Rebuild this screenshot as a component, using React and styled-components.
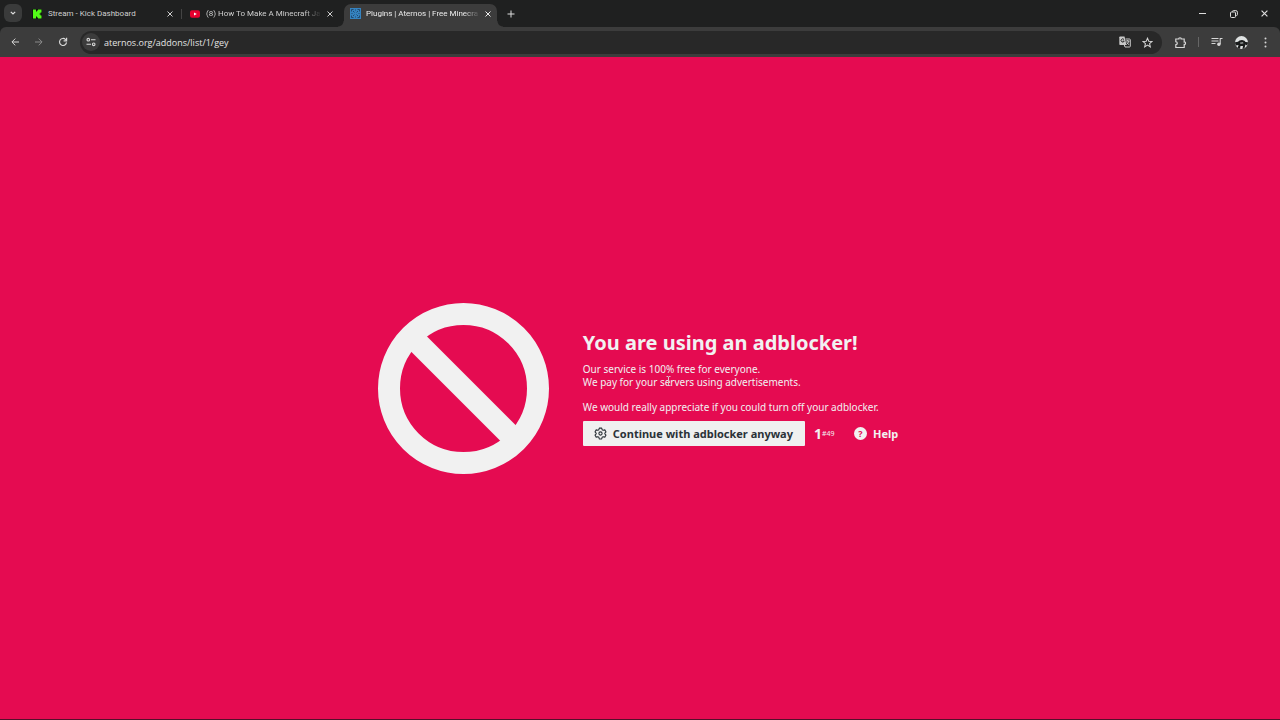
import React from 'react';
import styled, { createGlobalStyle } from 'styled-components';

const GlobalStyle = createGlobalStyle`
  * {
    box-sizing: border-box;
  }

  body {
    margin: 0;
    background: #e50b51;
    font-family: 'Open Sans', 'Noto Sans', sans-serif;
  }

  button {
    padding: 0;
    border: 0;
    background: none;
    color: inherit;
    font: inherit;
    cursor: pointer;
  }

  svg {
    display: block;
    flex: none;
  }
`;

const Browser = styled.div`
  display: flex;
  flex-direction: column;
  min-height: 100vh;
  background: #1f2020;
`;

const TabStrip = styled.header`
  display: flex;
  align-items: flex-end;
  height: 27px;
  padding-left: 4px;
  color: #dedede;
`;

const TabSearch = styled.button`
  display: grid;
  place-items: center;
  width: 18px;
  height: 18px;
  margin: 0 4px 5px 0;
  border-radius: 6px;
  background: #3a3b3b;
`;

const Tab = styled.div`
  position: relative;
  display: flex;
  align-items: center;
  gap: ${(props) => (props.$active ? 5 : 6)}px;
  width: 153px;
  height: 23px;
  padding: 0 6px 4px;
  border-radius: 7px 7px 0 0;
  background: ${(props) => (props.$active ? '#3c3c3c' : 'transparent')};
  color: ${(props) => (props.$active ? '#ececec' : '#cfcfcf')};

  &::before,
  &::after {
    content: '';
    display: ${(props) => (props.$active ? 'block' : 'none')};
    position: absolute;
    bottom: 0;
    width: 6px;
    height: 6px;
  }
  &::before {
    right: 100%;
    background: radial-gradient(circle at 0 0, transparent 5px, #3c3c3c 6px);
  }
  &::after {
    left: 100%;
    background: radial-gradient(circle at 100% 0, transparent 5px, #3c3c3c 6px);
  }
`;

const TabTitle = styled.span`
  flex: 1;
  font-family: Roboto, 'Open Sans', sans-serif;
  font-size: 8px;
  line-height: 12px;
  white-space: nowrap;
  mask-image: ${(props) =>
    props.$fade ? 'linear-gradient(to left, transparent, #000 16px)' : 'none'};
`;

const TabDivider = styled.span`
  width: 1px;
  height: 10px;
  margin: 0 ${(props) => (props.$hidden ? 3 : 2)}px 8px;
  background: ${(props) => (props.$hidden ? 'transparent' : '#444')};
`;

const IconButton = styled.button`
  display: grid;
  place-items: center;
  width: ${(props) => props.$width || 12}px;
  height: ${(props) => props.$height || 18}px;
  opacity: ${(props) => (props.disabled ? 0.5 : 1)};
`;

const WindowButtons = styled.div`
  display: flex;
  align-items: center;
  height: 27px;
  margin-left: auto;
`;

const Toolbar = styled.nav`
  display: flex;
  align-items: center;
  height: 30px;
  padding: 0 5px 0 3px;
  border-radius: 6px 6px 0 0;
  background: #3c3c3c;
  color: #d6d6d6;
`;

const AddressBar = styled.label`
  display: flex;
  flex: 1;
  align-items: center;
  height: 23px;
  margin: 0 7px 0 5px;
  padding: 0 4px 0 2px;
  border-radius: 12px;
  background: #282828;
`;

const SiteInfo = styled.button`
  display: grid;
  place-items: center;
  width: 18px;
  height: 18px;
  margin-right: 4px;
  border-radius: 50%;
  background: #3c3c3c;
`;

const Address = styled.input`
  flex: 1;
  min-width: 0;
  padding: 0;
  border: 0;
  outline: 0;
  background: none;
  color: #e4e4e4;
  font-family: inherit;
  font-size: 9px;
`;

const ToolDivider = styled.span`
  width: 1px;
  height: 10px;
  margin: 0 6px;
  background: #666;
`;

const Page = styled.main`
  display: flex;
  flex: 1;
  align-items: center;
  justify-content: center;
  gap: 34px;
  padding-right: 4px;
  border-bottom: 1px solid #54102a;
  background: #e50b51;
  color: #f1f1f1;
`;

const Message = styled.section`
  position: relative;
  padding-bottom: 2px;
  font-family: 'Noto Sans', 'Open Sans', sans-serif;
`;

const Title = styled.h1`
  margin: 0 0 6px;
  font-size: 20px;
  line-height: 28px;
`;

const Paragraph = styled.p`
  margin: 0 0 12px;
  font-size: 10px;
  line-height: 13px;
`;

const Actions = styled.div`
  display: flex;
  align-items: center;
  margin-top: -5px;
  font-size: 11px;
  font-weight: 700;
`;

const Continue = styled.button`
  display: flex;
  align-items: center;
  gap: 6px;
  height: 25px;
  padding: 0 12px 0 11px;
  border-radius: 1px;
  background: #f0f0f0;
  color: #2b3238;
`;

const Counter = styled.span`
  display: flex;
  align-items: center;
  width: 40px;
  margin-left: 9px;
  font-size: 14px;
`;

const CounterId = styled.small`
  font-size: 7px;
  font-weight: 400;
`;

const Help = styled.a`
  display: flex;
  align-items: center;
  gap: 6px;
  color: inherit;
  text-decoration: none;
`;

const HelpMark = styled.span`
  display: grid;
  place-items: center;
  width: 13px;
  height: 13px;
  border-radius: 50%;
  background: #f1f1f1;
  color: #e50b51;
  font-size: 9px;
  line-height: 13px;
`;

const TextCursor = styled.svg`
  position: absolute;
  top: 47px;
  left: 83px;
`;

function Icon({ size = 12, box = 24, width = 2, children }) {
  return (
    <svg
      width={size}
      height={size}
      viewBox={`0 0 ${box} ${box}`}
      fill="none"
      stroke="currentColor"
      strokeWidth={width}
      aria-hidden="true"
    >
      {children}
    </svg>
  );
}

function CloseIcon({ size = 6 }) {
  return (
    <Icon size={size} box={6} width={1}>
      <path d="M.5 .5l5 5M5.5 .5l-5 5" />
    </Icon>
  );
}

function KickIcon() {
  return (
    <svg width="10" height="10" viewBox="0 0 10 10" aria-hidden="true">
      <path fill="#101510" d="M0 0h10v10H0z" />
      <path
        fill="#53fc18"
        d="M1 .5h3v2h1v-1h1v-1h3.500v3h-1v1h-1v1h1v1h1v3H6v-1H5v-1H4v2H1z"
      />
    </svg>
  );
}

function YoutubeIcon() {
  return (
    <svg width="10" height="10" viewBox="0 0 10 10" aria-hidden="true">
      <rect y="1.300" width="10" height="7.400" rx="2" fill="#e8002f" />
      <path fill="#fff" d="M4 3.400L6.800 5 4 6.600z" />
    </svg>
  );
}

function AternosIcon() {
  return (
    <svg width="11" height="11" viewBox="0 0 11 11" fill="none" aria-hidden="true">
      <path fill="#3583c0" d="M0 0h11v11H0z" />
      <path
        stroke="#1d4468"
        strokeWidth=".9"
        d="M1.500 3.500v-2h2M7.500 1.500h2v2M9.500 7.500v2h-2M3.500 9.500h-2v-2M3 3l1.500 1.500M8 3L6.500 4.500M3 8l1.500-1.500M8 8L6.500 6.500M5.500 1.500v1M5.500 8.500v1M1.500 5.500h1M8.500 5.500h1"
      />
    </svg>
  );
}

function Avatar() {
  return (
    <svg width="13" height="13" viewBox="0 0 13 13" aria-hidden="true">
      <circle cx="6.500" cy="6.500" r="6.500" fill="#dfe2e2" />
      <path
        fill="#1a1c1c"
        d="M0 6.200L3 5.800 4.500 4.500 7 4l2.500.8L10.500 6l2.500.2Q13 8 12 9.500L10.500 8.500 9.500 12Q8.500 12.900 7.500 12.900L8 10H5.500L5 12.800Q3.500 12.500 2.800 11.700L3.500 9 1 9.500Q0 8 0 6.200z"
      />
      <path fill="#8b9090" d="M5 6.500l3-.5.500 1.500-3 .5z" />
    </svg>
  );
}

function App() {
  const [url, setUrl] = React.useState('aternos.org/addons/list/1/gey');

  return (
    <Browser>
      <GlobalStyle />
      <TabStrip>
        <TabSearch aria-label="Search tabs">
          <Icon size={6} box={6} width={1.2}>
            <path d="M.8 1.800L3 4l2.200-2.200" />
          </Icon>
        </TabSearch>
        <Tab>
          <KickIcon />
          <TabTitle>Stream - Kick Dashboard</TabTitle>
          <IconButton aria-label="Close tab" $width={6}>
            <CloseIcon />
          </IconButton>
        </Tab>
        <TabDivider />
        <Tab>
          <YoutubeIcon />
          <TabTitle $fade>(8) How To Make A Minecraft Ja</TabTitle>
          <IconButton aria-label="Close tab" $width={6}>
            <CloseIcon />
          </IconButton>
        </Tab>
        <TabDivider $hidden />
        <Tab $active>
          <AternosIcon />
          <TabTitle $fade>Plugins | Aternos | Free Minecra</TabTitle>
          <IconButton aria-label="Close tab" $width={6}>
            <CloseIcon />
          </IconButton>
        </Tab>
        <IconButton aria-label="New tab" $width={28} $height={27}>
          <Icon size={8} box={8} width={1}>
            <path d="M4 .5v7M.5 4h7" />
          </Icon>
        </IconButton>
        <WindowButtons>
          <IconButton aria-label="Minimize" $width={31}>
            <Icon size={7} box={7} width={1}>
              <path d="M0 3.500h7" />
            </Icon>
          </IconButton>
          <IconButton aria-label="Restore" $width={31}>
            <Icon size={8} box={8} width={1}>
              <rect x=".5" y="2" width="5" height="5.500" rx="1" />
              <path d="M2.300 1.700Q2.400.6 3.500.6h2.300q1.600 0 1.600 1.600v2.300q0 1-1.100 1.200" />
            </Icon>
          </IconButton>
          <IconButton aria-label="Close window" $width={31}>
            <CloseIcon size={7} />
          </IconButton>
        </WindowButtons>
      </TabStrip>

      <Toolbar>
        <IconButton aria-label="Back" $width={24}>
          <Icon size={8} box={8} width={1}>
            <path d="M8 4H1M4.300.6L.9 4l3.400 3.400" />
          </Icon>
        </IconButton>
        <IconButton aria-label="Forward" $width={24} disabled>
          <Icon size={8} box={8} width={1}>
            <path d="M0 4h7M3.700.6L7.100 4 3.700 7.400" />
          </Icon>
        </IconButton>
        <IconButton aria-label="Reload" $width={24}>
          <Icon size={10} box={10} width={1.2}>
            <path d="M8.500 5.400A3.500 3.500 0 1 1 7.600 2.600L8.500 3.500" />
            <path d="M8.600.8v3H5.600" />
          </Icon>
        </IconButton>
        <AddressBar>
          <SiteInfo aria-label="Site information">
            <Icon size={10} box={10} width={1.1}>
              <circle cx="2.300" cy="2.700" r="1.300" />
              <circle cx="7.700" cy="7.300" r="1.300" />
              <path d="M5 2.700h4.500M.5 7.300H5" />
            </Icon>
          </SiteInfo>
          <Address
            aria-label="Address"
            value={url}
            onChange={(e) => setUrl(e.target.value)}
          />
          <IconButton aria-label="Translate" $width={22}>
            <svg width="12" height="12" viewBox="0 0 12 12" fill="none" aria-hidden="true">
              <path fill="#c9c9c9" d="M1 .5h4.500l2 8.500H1Q.3 9 .3 8.300V1.200Q.3.500 1 .5z" />
              <path stroke="#282828" d="M5 3.500a1.600 1.600 0 1 0 .2 1.600H3.800" />
              <path
                stroke="#c9c9c9"
                d="M6.500 3h4q.8 0 .8.800v6.400q0 .8-.8.800H6L5.300 9M7 5h3.500M8.700 4v1M9.900 5Q9.500 7 7.500 8.500M7.700 6.200L9.900 8.800"
              />
            </svg>
          </IconButton>
          <IconButton aria-label="Bookmark" $width={22}>
            <Icon size={11} width={2.2}>
              <path d="M12 2.500l2.800 6.600 7.200.6-5.500 4.700 1.700 7-6.200-3.800-6.200 3.800 1.700-7L2 9.700l7.200-.6z" />
            </Icon>
          </IconButton>
        </AddressBar>
        <IconButton aria-label="Extensions" $width={23}>
          <Icon size={13} box={13} width={1.2}>
            <path d="M1.800 3h3Q4.500 1.800 6 1.800T7.200 3h3v3Q11.500 5.800 11.500 7.200T10.200 8.500v3H1.800V8.700Q3.300 8.500 3.300 7.200T1.800 5.700z" />
          </Icon>
        </IconButton>
        <ToolDivider />
        <IconButton aria-label="Media" $width={23}>
          <Icon size={12} box={12} width={1.1}>
            <path d="M.5 2.500h7M.5 5h7M.5 7.500h4M9.200 8V2.500h2.300" />
            <circle cx="7.900" cy="8.200" r="1.200" fill="currentColor" />
          </Icon>
        </IconButton>
        <IconButton aria-label="Profile" $width={27}>
          <Avatar />
        </IconButton>
        <IconButton aria-label="Menu" $width={20}>
          <svg width="3" height="11" viewBox="0 0 3 11" fill="currentColor" aria-hidden="true">
            <circle cx="1.500" cy="1.500" r="1" />
            <circle cx="1.500" cy="5.500" r="1" />
            <circle cx="1.500" cy="9.500" r="1" />
          </svg>
        </IconButton>
      </Toolbar>

      <Page>
        <Icon size={171} box={171} width={22}>
          <circle cx="85.500" cy="85.500" r="74.500" />
          <path d="M33 33l105 105" />
        </Icon>
        <Message>
          <Title>You are using an adblocker!</Title>
          <Paragraph>
            Our service is 100% free for everyone.
            <br />
            We pay for your servers using advertisements.
          </Paragraph>
          <Paragraph>
            We would really appreciate if you could turn off your adblocker.
          </Paragraph>
          <Actions>
            <Continue>
              <Icon size={13} width={2}>
                <path
                  strokeLinejoin="round"
                  d="M9.800 2h4.400l.8 3 2 1.100 3-.8 2.200 3.800-2.200 2.200v1.400l2.200 2.200-2.200 3.800-3-.8-2 1.100-.8 3H9.800L9 19l-2-1.100-3 .8-2.200-3.800L4 12.700v-1.400L1.800 9.100 4 5.300l3 .8L9 5z"
                />
                <circle cx="12" cy="12" r="3" />
              </Icon>
              Continue with adblocker anyway
            </Continue>
            <Counter>
              1<CounterId>#49</CounterId>
            </Counter>
            <Help href="#help">
              <HelpMark>?</HelpMark>
              Help
            </Help>
          </Actions>
          <TextCursor width="5" height="10" viewBox="0 0 5 10" fill="none" stroke="#d9c4cb">
            <path d="M.5.5h1.500l.5.500.5-.5h1.500M2.500 1v8M.5 9.500h1.500l.5-.5.5.5h1.500" />
          </TextCursor>
        </Message>
      </Page>
    </Browser>
  );
}

export default App;
